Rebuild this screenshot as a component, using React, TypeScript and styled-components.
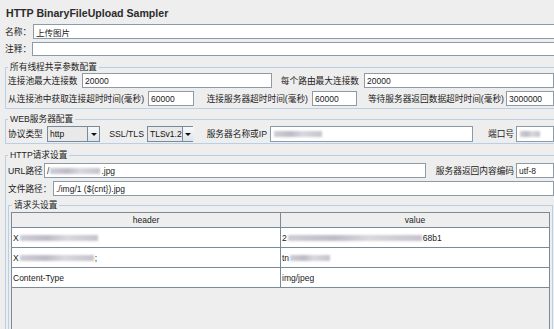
import styled, { createGlobalStyle } from 'styled-components';

const GlobalStyle = createGlobalStyle`
  html, body {
    margin: 0;
    padding: 0;
    background: #eeeeee;
    overflow: hidden;
  }
  body {
    font-family: "Liberation Sans", "Noto Sans CJK SC", sans-serif;
    color: #222;
  }
`;

const Page = styled.div`
  width: 560px;
  height: 329px;
  overflow: hidden;
  background: #eeeeee;
`;

const Title = styled.h1`
  margin: 0;
  height: 24px;
  box-sizing: border-box;
  padding: 7px 0 0 6px;
  font-size: 10.6px;
  line-height: 12px;
  font-weight: bold;
  color: #2b2b2b;
`;

const Row = styled.div<{ $mt?: number; $h?: number; $pl?: number }>`
  display: flex;
  align-items: center;
  height: ${(p) => p.$h ?? 15}px;
  margin-top: ${(p) => p.$mt ?? 0}px;
  padding-left: ${(p) => p.$pl ?? 0}px;
`;

const Label = styled.span<{ $w?: number; $right?: boolean; $pr?: number }>`
  flex: none;
  width: ${(p) => (p.$w ? `${p.$w}px` : 'auto')};
  box-sizing: border-box;
  padding-right: ${(p) => p.$pr ?? 0}px;
  text-align: ${(p) => (p.$right ? 'right' : 'left')};
  font-size: 8.7px;
  line-height: 12px;
  white-space: nowrap;
  overflow: hidden;
  color: #1c1c1c;
`;

const Field = styled.div<{ $w?: number }>`
  flex: ${(p) => (p.$w ? 'none' : '1')};
  width: ${(p) => (p.$w ? `${p.$w}px` : 'auto')};
  height: 100%;
  box-sizing: border-box;
  border: 1px solid #8d9aa7;
  background: #ffffff;
  display: flex;
  align-items: center;
  padding-left: 2px;
  font-size: 8.5px;
  color: #1a1a1a;
  white-space: nowrap;
  overflow: hidden;
`;

const Combo = styled.div<{ $w: number }>`
  flex: none;
  width: ${(p) => p.$w}px;
  height: 100%;
  box-sizing: border-box;
  border: 1px solid #7a8a99;
  background: #e9e9e9;
  display: flex;
  font-size: 8.5px;
  color: #111;
`;

const ComboText = styled.span`
  flex: 1;
  display: flex;
  align-items: center;
  padding-left: 2px;
`;

const ArrowButton = styled.span`
  flex: none;
  width: 11px;
  border-left: 1px solid #7a8a99;
  background: linear-gradient(#f7f9fb, #dde4ea);
  display: flex;
  align-items: center;
  justify-content: center;

  &::after {
    content: '';
    border-left: 3px solid transparent;
    border-right: 3px solid transparent;
    border-top: 3px solid #111;
    margin-top: 1px;
  }
`;

const Group = styled.fieldset<{ $mt: number; $pt?: number; $pb?: number }>`
  margin: ${(p) => p.$mt}px 0 0 5px;
  padding: ${(p) => p.$pt ?? 0}px 0 ${(p) => p.$pb ?? 0}px 1px;
  border: 1px solid #b8cfe5;
  min-width: 0;
  width: 555px;
  box-sizing: border-box;
`;

const SubGroup = styled.fieldset`
  margin: 4px 0 0 1px;
  padding: 1px 2px 0 2px;
  border: 1px solid #b8cfe5;
  min-width: 0;
  width: 545px;
  height: 170px;
  box-sizing: border-box;
`;

const Legend = styled.legend`
  margin-left: 1px;
  padding: 0 2px;
  font-size: 8.7px;
  line-height: 11px;
  color: #1c1c1c;
`;

const Blur = styled.span<{ $w: number }>`
  display: inline-block;
  width: ${(p) => p.$w}px;
  height: 6px;
  margin: 0 1px;
  background: linear-gradient(90deg, #cfcdd4, #bdbbc6 35%, #d9d8dd 60%, #c6c3cc);
  filter: blur(1.1px);
  vertical-align: middle;
`;

const Table = styled.div`
  border: 1px solid #7a8a99;
  background: #eeeeee;
  height: 170px;
`;

const HeaderRow = styled.div`
  display: grid;
  grid-template-columns: 269px 1fr;
  height: 15px;
  border-bottom: 1px solid #7a8a99;
  box-sizing: border-box;
`;

const HeaderCell = styled.div`
  text-align: center;
  font-size: 8.5px;
  line-height: 14px;
  color: #222;

  &:first-child {
    border-right: 1px solid #7a8a99;
  }
`;

const BodyRow = styled.div`
  display: grid;
  grid-template-columns: 269px 1fr;
  height: 20px;
  border-bottom: 1px solid #7a8a99;
  box-sizing: border-box;
  background: #ffffff;
`;

const Cell = styled.div`
  display: flex;
  align-items: center;
  padding-left: 1px;
  font-size: 8.5px;
  color: #1a1a1a;
  white-space: nowrap;

  &:first-child {
    border-right: 1px solid #7a8a99;
  }
`;

const headers = [
  { key: <>X<Blur $w={78} /></>, value: <>2<Blur $w={134} />68b1</> },
  { key: <>X<Blur $w={74} />;</>, value: <>tn<Blur $w={40} /></> },
  { key: <>Content-Type</>, value: <>img/jpeg</> },
];

export default function App() {
  return (
    <Page>
      <GlobalStyle />
      <Title>HTTP BinaryFileUpload Sampler</Title>

      <Row $pl={5}>
        <Label $w={28}>名称：</Label>
        <Field>上传图片</Field>
      </Row>
      <Row $pl={5} $mt={3} $h={14}>
        <Label $w={27}>注释：</Label>
        <Field />
      </Row>

      <Group $mt={6} $pb={2}>
        <Legend>所有线程共享参数配置</Legend>
        <Row $pl={1}>
          <Label $w={74}>连接池最大连接数</Label>
          <Field $w={190}>20000</Field>
          <Label $w={92} $right $pr={5}>每个路由最大连接数</Label>
          <Field $w={190}>20000</Field>
        </Row>
        <Row $pl={1} $mt={3}>
          <Label $w={140}>从连接池中获取连接超时时间(毫秒)</Label>
          <Field $w={46}>60000</Field>
          <Label $w={118} $right $pr={4}>连接服务器超时时间(毫秒)</Label>
          <Field $w={45}>60000</Field>
          <Label $w={149} $right $pr={2}>等待服务器返回数据超时时间(毫秒)</Label>
          <Field $w={48}>3000000</Field>
        </Row>
      </Group>

      <Group $mt={5} $pt={1} $pb={1}>
        <Legend>WEB服务器配置</Legend>
        <Row $pl={1} $h={16}>
          <Label $w={39}>协议类型</Label>
          <Combo $w={53}>
            <ComboText>http</ComboText>
            <ArrowButton />
          </Combo>
          <Label $w={47} $right $pr={3}>SSL/TLS</Label>
          <Combo $w={46}>
            <ComboText>TLSv1.2</ComboText>
            <ArrowButton />
          </Combo>
          <Label $w={77} $right $pr={3}>服务器名称或IP</Label>
          <Field $w={203}><Blur $w={48} /></Field>
          <Label $w={43} $right $pr={2}>端口号</Label>
          <Field $w={38}><Blur $w={20} /></Field>
        </Row>
      </Group>

      <Group $mt={6} $pt={2}>
        <Legend>HTTP请求设置</Legend>
        <Row $pl={1}>
          <Label $w={36}>URL路径</Label>
          <Field $w={382}>/<Blur $w={50} />.jpg</Field>
          <Label $w={90} $right $pr={2}>服务器返回内容编码</Label>
          <Field $w={38}>utf-8</Field>
        </Row>
        <Row $pl={1} $mt={3}>
          <Label $w={45}>文件路径：</Label>
          <Field $w={501}>./img/1 (${'{cnt}'}).jpg</Field>
        </Row>
        <SubGroup>
          <Legend>请求头设置</Legend>
          <Table>
            <HeaderRow>
              <HeaderCell>header</HeaderCell>
              <HeaderCell>value</HeaderCell>
            </HeaderRow>
            {headers.map((h, i) => (
              <BodyRow key={i}>
                <Cell>{h.key}</Cell>
                <Cell>{h.value}</Cell>
              </BodyRow>
            ))}
          </Table>
        </SubGroup>
      </Group>
    </Page>
  );
}
